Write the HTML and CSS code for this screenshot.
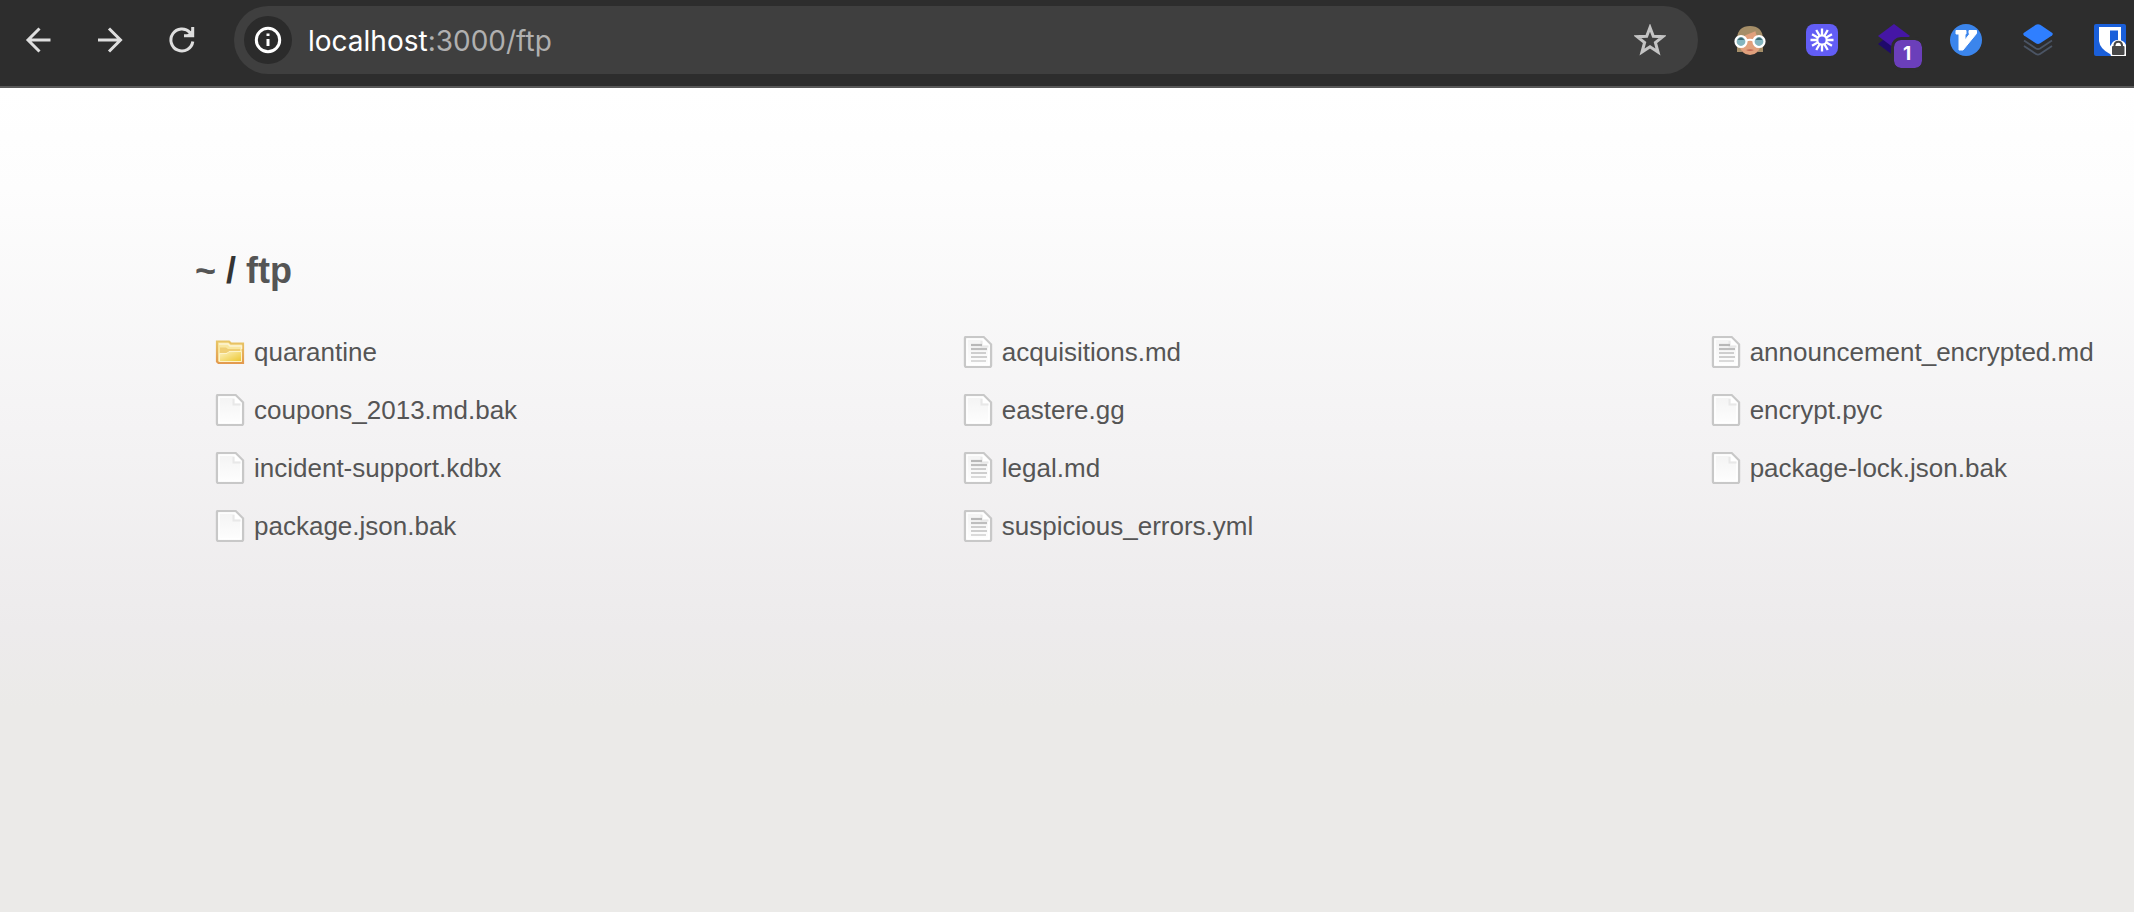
FILE: index.html
```html
<!DOCTYPE html>
<html lang="en">
<head>
<meta charset="utf-8">
<title>listing directory /ftp</title>
<link rel="stylesheet" href="styles.css">
</head>
<body>
<svg class="defs" aria-hidden="true">
  <defs>
    <linearGradient id="paper" x1="0" y1="0" x2="0" y2="1"><stop offset="0" stop-color="#f3f3f3"/><stop offset="1" stop-color="#fefefe"/></linearGradient>
    <linearGradient id="gold" x1="0" y1="0" x2="1" y2="1"><stop offset="0" stop-color="#fdf3c4"/><stop offset="1" stop-color="#ecc62d"/></linearGradient>
    <linearGradient id="rim" x1="0" y1="0" x2="0" y2="1"><stop offset="0" stop-color="#e8c566"/><stop offset="1" stop-color="#e39a4e"/></linearGradient>
    <symbol id="page" viewBox="0 0 32 32">
      <path d="M4 1H21.500L29 8.500V29.500Q29 31 27.500 31H4.500Q3 31 3 29.500V2Q3 1 4 1Z" fill="url(#paper)" stroke="#c8c8c8" stroke-width="2.400"/>
      <path d="M5 3H21L27 9V29H5Z" fill="none" stroke="#fff" stroke-width="1.600"/>
      <path d="M20.500 3V9.500H27Z" fill="#fff"/>
      <path d="M19.500 5V10.500H26.500" fill="none" stroke="#e8e8e8" stroke-width="2"/>
    </symbol>
    <symbol id="text-page" viewBox="0 0 32 32">
      <use href="#page"/>
      <path d="M9 9H20" stroke="#b8b8b8" stroke-width="2.200"/>
      <path d="M9 13H25" stroke="#bebebe" stroke-width="2.200"/>
      <path d="M9 17H24M9 21H25" stroke="#cecece" stroke-width="2"/>
      <path d="M9 25H24" stroke="#dadada" stroke-width="2"/>
    </symbol>
    <symbol id="folder" viewBox="0 0 32 32">
      <path d="M3 5.500H15L17 7.500H29V27H4.500L3 25.500Z" fill="#f9e7a0" stroke="url(#rim)" stroke-width="2.200"/>
      <path d="M5 8H14L16 10H27.500V13" fill="none" stroke="#fdf4d2" stroke-width="1.500"/>
      <path d="M6 11.500H12L14 13H26V16H14L12 17H6Z" fill="#efce74"/>
      <path d="M5.500 17.500H13L15 15.500H27.500V25.500H5.500Z" fill="url(#gold)" stroke="#fdf3c8"/>
    </symbol>
  </defs>
</svg>

<header class="toolbar">
  <nav class="nav" aria-label="Browser navigation">
    <button class="icon-button" type="button" aria-label="Back"><svg class="glyph" viewBox="0 0 32 32"><path d="M28.500 16H6.500M17.500 4.500L6 16L17.500 27.500"/></svg></button>
    <button class="icon-button" type="button" aria-label="Forward"><svg class="glyph" viewBox="0 0 32 32"><path d="M4 16H26M15 4.500L26.500 16L15 27.500"/></svg></button>
    <button class="icon-button" type="button" aria-label="Reload"><svg class="glyph" viewBox="0 0 32 32"><path d="M26.800 17.500A11 11 0 1 1 24 8.500L26 10.500"/><path d="M26.700 3V11.700H18"/><path class="glyph-fill" d="M20 12L27 5V12Z"/></svg></button>
  </nav>

  <div class="address">
    <button class="site-info" type="button" aria-label="Site information"><svg class="glyph glyph-white" viewBox="0 0 32 32"><circle cx="16" cy="16" r="11.700"/><path d="M16 15V22M16 9.500V12"/></svg></button>
    <a class="url" href="#"><span class="host">localhost</span>:3000/ftp</a>
    <button class="icon-button star" type="button" aria-label="Bookmark this page"><svg class="glyph" viewBox="0 0 32 32"><path d="M16 3.500L19.300 12.200L28.800 12.700L21.400 18.500L24 28L16 22.700L8 28L10.600 18.500L3.200 12.700L12.700 12.200Z"/></svg></button>
  </div>

  <div class="extensions">
    <button class="icon-button" type="button" aria-label="Face with glasses">
      <svg class="icon" viewBox="0 0 32 32">
        <path d="M3 28V14Q4 2 16 2T29 14V28H24V18H8V28Z" fill="#a58e68"/>
        <path d="M5 16L12 11L22 7L27 14V20Q25 31 16 31T5 20Z" fill="#e0a07c"/>
        <path d="M22 6Q12 8 4 15V10L14 3Z" fill="#a58e68"/>
        <path d="M21 5L28 12L27 16Q22 14 21 5Z" fill="#a58e68"/>
        <circle cx="7" cy="17.500" r="5.500" fill="#83b5bf" stroke="#fff" stroke-width="2.200"/>
        <circle cx="25" cy="17.500" r="5.500" fill="#83b5bf" stroke="#fff" stroke-width="2.200"/>
        <path d="M3.500 16Q7 11 10.500 16ZM21.500 16Q25 11 28.500 16Z" fill="#3e6871"/>
        <path d="M12 16.500Q16 15 20 16.500" fill="none" stroke="#fff" stroke-width="2.200"/>
        <path d="M12 26Q16 24.500 20 26Q16 28 12 26Z" fill="#bf6552"/>
      </svg>
    </button>
    <button class="icon-button" type="button" aria-label="Loom">
      <svg class="icon" viewBox="0 0 32 32">
        <rect width="32" height="32" rx="8" fill="#625df5"/>
        <circle cx="16" cy="16" r="4.700" fill="none" stroke="#fff" stroke-width="2.200"/>
        <g stroke="#fff" stroke-width="2.300">
          <path d="M16 4.500V11M16 21V27.500M4.500 16H11M21 16H27.500"/>
          <path d="M16 4.500V11M16 21V27.500M4.500 16H11M21 16H27.500" transform="rotate(30 16 16)"/>
          <path d="M16 4.500V11M16 21V27.500M4.500 16H11M21 16H27.500" transform="rotate(60 16 16)"/>
        </g>
      </svg>
    </button>
    <button class="icon-button badged" type="button" aria-label="Layers, 1 notification">
      <svg class="icon" viewBox="0 0 32 32"><path d="M0 20L5 16L32 20L16 32Z" fill="#1f0a6b"/><path d="M16 0L32 12L16 24L0 12Z" fill="#4516a5"/></svg>
      <span class="badge">1</span>
    </button>
    <button class="icon-button" type="button" aria-label="Vimium">
      <svg class="icon" viewBox="0 0 32 32"><circle cx="16" cy="16" r="16" fill="#3b85ec"/><path d="M6 6.500H16V10H15V16L20 9.500H19V6.500H26.500V9.500L13 26H9V10H6Z" fill="#fff" stroke="#fff" stroke-linejoin="round"/></svg>
    </button>
    <button class="icon-button" type="button" aria-label="Stack">
      <svg class="icon" viewBox="0 0 32 32">
        <path d="M13.800 .8Q16 -.5 18.200 .8L30 8.800Q31.500 10 30 11.500L18.200 19.300Q16 20.700 13.800 19.300L2 11.500Q.5 10 2 8.800Z" fill="#2f7fff"/>
        <path d="M2 16.500L14 24.500Q16 25.700 18 24.500L30 16.500M2 22L14 30Q16 31.300 18 30L30 22" fill="none" stroke="#4b5565" stroke-width="1.800"/>
      </svg>
    </button>
    <button class="icon-button" type="button" aria-label="Bitwarden, locked">
      <svg class="icon" viewBox="0 0 32 32">
        <rect width="32" height="32" rx="2" fill="#1a5fda"/>
        <path d="M5 3H27V17Q26 25 16 30Q6 25 5 17Z" fill="#fff"/><path d="M16 6.500H24V17L16 22Z" fill="#1a5fda"/>
        <path d="M17 32Q14 26 17 21Q19 16 24 16Q30 16 32 21V32Z" fill="#fff"/>
        <path d="M20.500 23V21A3.800 3.800 0 0 1 28 21V23" fill="none" stroke="#484848" stroke-width="2"/>
        <rect x="18" y="22" width="12.500" height="9" rx="1" fill="#484848"/>
      </svg>
    </button>
  </div>
</header>

<main class="listing">
  <h1 class="path"><a href="#">~</a> / <a href="#">ftp</a></h1>
  <ul class="files">
    <li><a class="file" href="#"><svg class="icon"><use href="#folder"/></svg>quarantine</a></li>
    <li><a class="file" href="#"><svg class="icon"><use href="#text-page"/></svg>acquisitions.md</a></li>
    <li><a class="file" href="#"><svg class="icon"><use href="#text-page"/></svg>announcement_encrypted.md</a></li>
    <li><a class="file" href="#"><svg class="icon"><use href="#page"/></svg>coupons_2013.md.bak</a></li>
    <li><a class="file" href="#"><svg class="icon"><use href="#page"/></svg>eastere.gg</a></li>
    <li><a class="file" href="#"><svg class="icon"><use href="#page"/></svg>encrypt.pyc</a></li>
    <li><a class="file" href="#"><svg class="icon"><use href="#page"/></svg>incident-support.kdbx</a></li>
    <li><a class="file" href="#"><svg class="icon"><use href="#text-page"/></svg>legal.md</a></li>
    <li><a class="file" href="#"><svg class="icon"><use href="#page"/></svg>package-lock.json.bak</a></li>
    <li><a class="file" href="#"><svg class="icon"><use href="#page"/></svg>package.json.bak</a></li>
    <li><a class="file" href="#"><svg class="icon"><use href="#text-page"/></svg>suspicious_errors.yml</a></li>
  </ul>
</main>
</body>
</html>
```
FILE: styles.css
```css
* {
  box-sizing: border-box;
}

body {
  margin: 0;
  min-height: 100vh;
  display: flex;
  flex-direction: column;
  font-family: "Liberation Sans", Arial, sans-serif;
  font-size: 26px;
  color: #555;
}

a {
  color: inherit;
  text-decoration: none;
}

button {
  padding: 0;
  border: 0;
  background: none;
  font: inherit;
  cursor: pointer;
}

.defs {
  position: absolute;
  width: 0;
  height: 0;
}

.toolbar {
  display: flex;
  align-items: center;
  gap: 36px;
  padding: 6px 8px 12px 22px;
  background: #2d2d2d;
  border-bottom: 2px solid #585858;
}

.nav,
.extensions {
  display: flex;
  gap: 40px;
}

.icon-button {
  display: flex;
  flex: none;
  width: 32px;
  height: 32px;
}

.icon,
.glyph {
  display: block;
  flex: none;
  width: 32px;
  height: 32px;
}

.glyph {
  fill: none;
  stroke: #dedede;
  stroke-width: 3;
}

.glyph-fill {
  fill: #dedede;
  stroke: none;
}

.glyph-white {
  stroke: #fff;
}

.address {
  display: flex;
  flex: 1;
  align-items: center;
  gap: 16px;
  height: 68px;
  padding: 0 32px 0 10px;
  border-radius: 34px;
  background: #3f3f3f;
}

.site-info {
  display: flex;
  flex: none;
  align-items: center;
  justify-content: center;
  width: 48px;
  height: 48px;
  border-radius: 50%;
  background: #2b2b2b;
}

.url {
  flex: 1;
  padding-top: 2px;
  font-family: Inter, Roboto, sans-serif;
  font-size: 28px;
  color: #b0b0b0;
}

.host {
  color: #fff;
}

.star .glyph {
  stroke: #c4c4c4;
}

.badged {
  position: relative;
}

.badge {
  position: absolute;
  top: 16px;
  left: 16px;
  width: 28px;
  height: 28px;
  padding-right: 2px;
  border-radius: 7px;
  outline: 3px solid #2d2d2d;
  background: #6b3fba;
  color: #fff;
  font-family: Inter, sans-serif;
  font-size: 19px;
  font-weight: 700;
  line-height: 28px;
  text-align: center;
}

.listing {
  flex: 1;
  padding: 161px 16px 80px 195px;
  background: linear-gradient(#fff, #fdfdfd 100px, #f4f3f4 340px, #edebec 540px, #ebeae8 620px);
}

.path {
  margin: 0;
  font-size: 36px;
  line-height: 44px;
  color: #343434;
}

.path a {
  color: #555;
}

.files {
  display: grid;
  grid-template-columns: 7fr 7fr 4fr;
  margin: 30px 0 0;
  padding: 0;
  list-style: none;
}

.file {
  display: flex;
  align-items: center;
  gap: 8px;
  height: 58px;
  padding-left: 19px;
  white-space: nowrap;
}
```
